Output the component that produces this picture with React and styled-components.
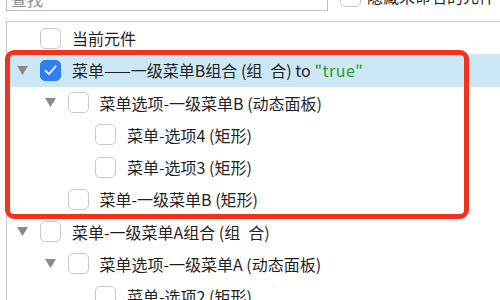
import React from 'react';
import styled, { createGlobalStyle } from 'styled-components';

const GlobalStyle = createGlobalStyle`
  html, body {
    margin: 0;
    padding: 0;
    background: #ffffff;
    overflow: hidden;
  }
  body {
    font-family: "Noto Sans CJK SC", "Noto Sans", sans-serif;
    color: #1f1f1f;
  }
`;

const Page = styled.div`
  position: relative;
  width: 500px;
  height: 300px;
  overflow: hidden;
`;

const Toolbar = styled.div`
  display: flex;
  align-items: center;
  height: 24px;
  margin-top: -13px;
  padding-left: 6px;
  gap: 12px;
`;

const SearchBox = styled.div`
  box-sizing: border-box;
  width: 322px;
  height: 24px;
  border: 1px solid #bdbdbd;
  padding-left: 4px;
  font-size: 16px;
  line-height: 22px;
  color: #8e8e8e;
  white-space: nowrap;
`;

const HideOption = styled.label`
  display: flex;
  align-items: center;
  gap: 6px;
  font-size: 16px;
  line-height: 22px;
  white-space: nowrap;
  margin-top: -6px;
`;

const Panel = styled.div`
  margin-top: 10px;
  margin-left: 6px;
  border-top: 1px solid #c9c9c9;
  border-left: 1px solid #c9c9c9;
`;

const Row = styled.div`
  display: flex;
  align-items: center;
  height: 32.25px;
  padding-left: ${p => 10 + (p.$level - 1) * 27.5}px;
  background: ${p => (p.$selected ? '#cce7f6' : 'transparent')};
`;

const Toggle = styled.span`
  width: 11px;
  height: 9px;
  flex: none;
  margin-right: 12px;
  display: flex;
  align-items: center;
  justify-content: center;
`;

const Box = styled.span`
  box-sizing: border-box;
  width: 21px;
  height: 21px;
  flex: none;
  border-radius: 5px;
  border: 1px solid ${p => (p.$checked ? '#2d7cf5' : '#c9c9c9')};
  background: ${p => (p.$checked ? '#2f7ef6' : '#ffffff')};
  display: flex;
  align-items: center;
  justify-content: center;
`;

const Label = styled.span`
  margin-left: 11px;
  font-size: 16px;
  line-height: 22px;
  white-space: nowrap;
`;

const Value = styled.span`
  color: #2e9a2a;
  letter-spacing: 0.5px;
`;

const Highlight = styled.div`
  position: absolute;
  left: 5px;
  top: 50px;
  width: 464px;
  height: 169px;
  box-sizing: border-box;
  border: 5px solid #f3321c;
  border-radius: 9px;
  pointer-events: none;
`;

const Triangle = () => (
  <svg width="11" height="9" viewBox="0 0 11 9">
    <path d="M0 0 H11 L5.5 9 Z" fill="#8a8a8a" />
  </svg>
);

const Check = () => (
  <svg width="13" height="11" viewBox="0 0 13 11">
    <path d="M1.5 5.8 L5 9 L11.5 1.5" fill="none" stroke="#ffffff" strokeWidth="1.8" strokeLinecap="round" strokeLinejoin="round" />
  </svg>
);

const rows = [
  { level: 1, text: '当前元件' },
  { level: 1, open: true, checked: true, selected: true, text: '菜单——一级菜单B组合 (组\u2002合) to ', value: '"true"' },
  { level: 2, open: true, text: '菜单选项-一级菜单B (动态面板)' },
  { level: 3, text: '菜单-选项4 (矩形)' },
  { level: 3, text: '菜单-选项3 (矩形)' },
  { level: 2, text: '菜单-一级菜单B (矩形)' },
  { level: 1, open: true, text: '菜单-一级菜单A组合 (组\u2002合)' },
  { level: 2, open: true, text: '菜单选项-一级菜单A (动态面板)' },
  { level: 3, text: '菜单-选项2 (矩形)' },
];

export default function App() {
  return (
    <Page>
      <GlobalStyle />
      <Toolbar>
        <SearchBox>查找</SearchBox>
        <HideOption>
          <Box />
          隐藏未命名的元件
        </HideOption>
      </Toolbar>
      <Panel>
        {rows.map((r, i) => (
          <Row key={i} $level={r.level} $selected={r.selected}>
            <Toggle>{r.open && <Triangle />}</Toggle>
            <Box $checked={r.checked}>{r.checked && <Check />}</Box>
            <Label>
              {r.text}
              {r.value && <Value>{r.value}</Value>}
            </Label>
          </Row>
        ))}
      </Panel>
      <Highlight />
    </Page>
  );
}
